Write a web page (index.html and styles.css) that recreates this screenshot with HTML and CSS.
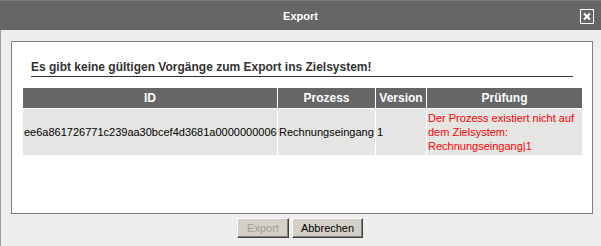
FILE: index.html
```html
<!DOCTYPE html>
<html lang="de">
<head>
    <meta charset="UTF-8">
    <meta name="viewport" content="width=device-width, initial-scale=1.0">
    <title>Export</title>
    <link rel="stylesheet" href="styles.css">
</head>
<body>
    <div class="window">
        <div class="titlebar">
            <span></span>
            <span class="title">Export</span>
            <a href="#" class="close">
                <svg width="8" height="9" viewBox="0 0 8 9">
                    <path d="M1 1.5 L7 7.5 M7 1.5 L1 7.5" stroke="#fff" stroke-width="2" fill="none"/>
                </svg>
            </a>
        </div>

        <div class="content">
            <div class="panel">
                <h3 class="message">Es gibt keine gültigen Vorgänge zum Export ins Zielsystem!</h3>
                <table class="result">
                    <thead>
                        <tr>
                            <th class="col-id">ID</th>
                            <th class="col-proc">Prozess</th>
                            <th class="col-ver">Version</th>
                            <th class="col-check">Prüfung</th>
                        </tr>
                    </thead>
                    <tbody>
                        <tr>
                            <td class="nowrap">ee6a861726771c239aa30bcef4d3681a0000000006</td>
                            <td class="nowrap">Rechnungseingang</td>
                            <td>1</td>
                            <td class="error">Der Prozess existiert nicht auf dem Zielsystem: Rechnungseingang|1</td>
                        </tr>
                    </tbody>
                </table>
            </div>

            <div class="buttons">
                <button class="btn btn-export" disabled>Export</button>
                <button class="btn btn-cancel">Abbrechen</button>
            </div>
        </div>
    </div>
</body>
</html>
```

FILE: styles.css
```css
*{
    margin: 0;
    padding: 0;
    box-sizing: border-box;
}

body{
    background-color: #eeeeee;
    font-family: "Liberation Sans", Arial, sans-serif;
    font-size: 11px;
    color: #000;
}

.window{
    width: 601px;
    height: 246px;
    border-left: 1px solid #9a9a9a;
}

.titlebar{
    display: grid;
    grid-template-columns: 1fr auto 1fr;
    align-items: center;
    height: 30px;
    background-color: #666666;
    border-top: 1px solid #7a7a7a;
    margin-left: -1px;
}

.title{
    color: #fff;
    font-weight: bold;
    font-size: 11px;
}

.close{
    justify-self: end;
    display: flex;
    align-items: center;
    justify-content: center;
    width: 14px;
    height: 15px;
    margin-right: 7px;
    margin-top: 1px;
    border: 1px solid #fff;
}

.content{
    padding: 11px 8px 0 10px;
}

.panel{
    height: 173px;
    background-color: #fff;
    border: 1px solid #808080;
    padding: 18px 0 0 0;
}

.message{
    margin: 0 19px;
    padding-bottom: 1px;
    font-size: 12px;
    line-height: 15px;
    color: #333;
    border-bottom: 1px solid #333;
}

.result{
    table-layout: fixed;
    width: 561px;
    margin: 10px 0 0 10px;
    border-collapse: separate;
    border-spacing: 1px;
    background-color: #fff;
}

.result th{
    height: 20px;
    background-color: #666666;
    color: #fff;
    font-size: 12px;
    font-weight: bold;
    text-align: center;
}

.col-id{ width: 254px; }
.col-proc{ width: 97px; }
.col-ver{ width: 50px; }
.col-check{ width: 155px; }

.result td{
    height: 46px;
    padding: 2px 1px;
    background-color: #e5e6e3;
    line-height: 14px;
    vertical-align: middle;
    text-align: left;
    overflow: hidden;
}

.nowrap{
    white-space: nowrap;
}

.error{
    color: #ff0000;
}

.buttons{
    display: flex;
    justify-content: center;
    gap: 3px;
    margin-top: 4px;
    margin-left: -4px;
}

.btn{
    height: 20px;
    background-color: #d4d0c8;
    border: 1px solid;
    border-color: #fff #404040 #404040 #fff;
    box-shadow: inset -1px -1px #808080;
    font-family: "Liberation Sans", Arial, sans-serif;
    font-size: 11px;
    color: #000;
}

.btn-export{
    width: 52px;
    color: #a09c94;
}

.btn-cancel{
    width: 71px;
}
```
